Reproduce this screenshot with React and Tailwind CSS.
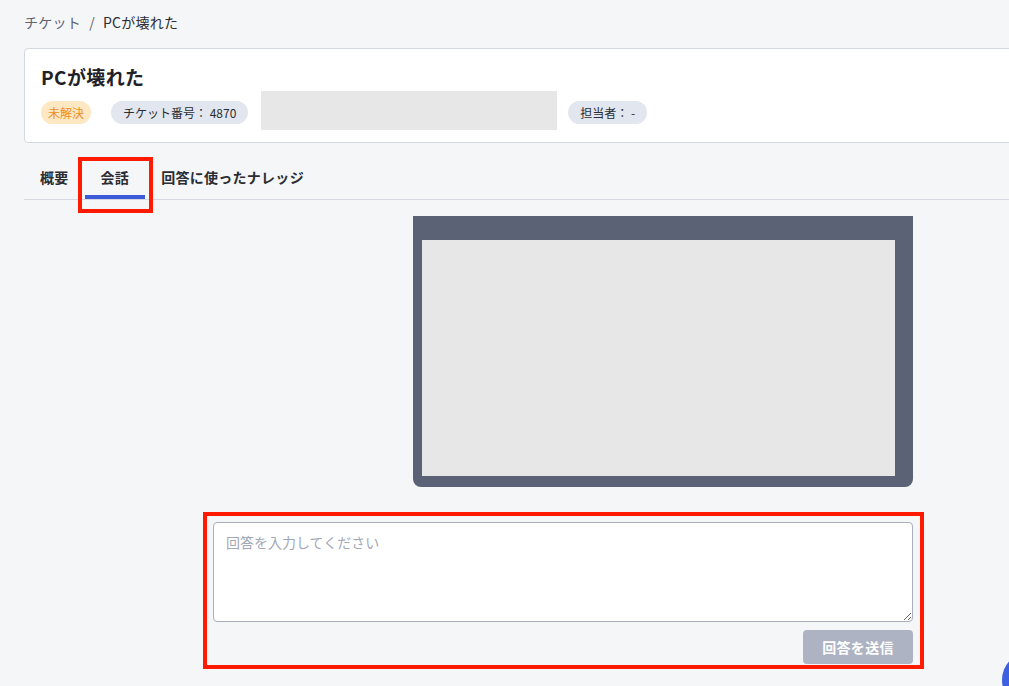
export default function App() {
  return (
    <div
      className="relative w-[1009px] h-[686px] overflow-hidden bg-[#f5f6f8] text-[#2b2d33]"
      style={{ fontFamily: '"Noto Sans CJK JP", "Noto Sans", sans-serif' }}
    >
      <div className="w-[1102px] pl-6">
        <div className="pt-3 h-[48px] text-[14px] leading-[20px] flex items-start gap-2 tracking-[0.02em]">
          <span className="text-[#5f6370]">チケット</span>
          <span className="text-[#5f6370]">/</span>
          <span className="text-[#2b2d33]">PCが壊れた</span>
        </div>

        <div className="bg-white border border-[#d4d8e1] rounded-[4px] pt-[15px] pb-3 px-4">
          <div className="text-[19px] leading-[26px] font-bold text-[#1f2126] tracking-[0.02em]">PCが壊れた</div>
          <div className="mt-[1px] flex items-center h-[39px]">
            <span className="mt-[3px] h-[23px] px-[7px] rounded-full bg-[#fde8c3] text-[#f08c1e] text-[12px] leading-[23px]">未解決</span>
            <span className="mt-[3px] ml-5 h-[23px] px-3 rounded-full bg-[#e2e6ee] text-[#2b2d33] text-[12px] leading-[23px]">チケット番号： 4870</span>
            <div className="ml-[13px] w-[296px] h-[39px] bg-[#e7e7e7]"></div>
            <span className="mt-[3px] ml-[11px] h-[23px] px-3 rounded-full bg-[#e2e6ee] text-[#2b2d33] text-[12px] leading-[23px]">担当者： -</span>
          </div>
        </div>

        <div className="mt-[15px] flex border-b border-[#d4d8e1] text-[14px] leading-[20px] font-bold text-[#2b2d33] tracking-[0.02em]">
          <div className="px-4 pt-[9px] pb-[8px] border-b-4 border-transparent">概要</div>
          <div className="px-4 pt-[9px] pb-[8px] border-b-4 border-[#3d5bd9]">会話</div>
          <div className="px-4 pt-[9px] pb-[8px] border-b-4 border-transparent">回答に使ったナレッジ</div>
        </div>

        <div className="w-[700px] ml-[189px] flex flex-col">
          <div className="mt-[16px] self-end w-[500px] h-[271px] bg-[#5c6275] rounded-b-[8px] pt-[24px] pl-[9px] pr-[18px] pb-[11px]">
            <div className="w-full h-full bg-[#e7e7e7]"></div>
          </div>

          <textarea
            className="mt-[35px] w-[700px] h-[100px] bg-white border border-[#a8aebb] rounded-[4px] px-3 py-[8px] text-[14px] leading-[22px] placeholder-[#a3a8b6] outline-none"
            placeholder="回答を入力してください"
          ></textarea>
          <div className="mt-2 flex justify-end">
            <button className="w-[110px] h-[34px] rounded-[4px] bg-[#adb3c2] text-white text-[14px] font-bold tracking-[0.02em]">回答を送信</button>
          </div>
        </div>
      </div>

      <div className="absolute left-[78px] top-[157px] w-[75px] h-[56px] border-4 border-[#ff1a00]"></div>
      <div className="absolute left-[203px] top-[512px] w-[721px] h-[157px] border-4 border-[#ff1a00]"></div>
      <div className="absolute left-[1002px] top-[652px] w-[56px] h-[56px] rounded-full bg-[#3d5fe0]"></div>
    </div>
  );
}
